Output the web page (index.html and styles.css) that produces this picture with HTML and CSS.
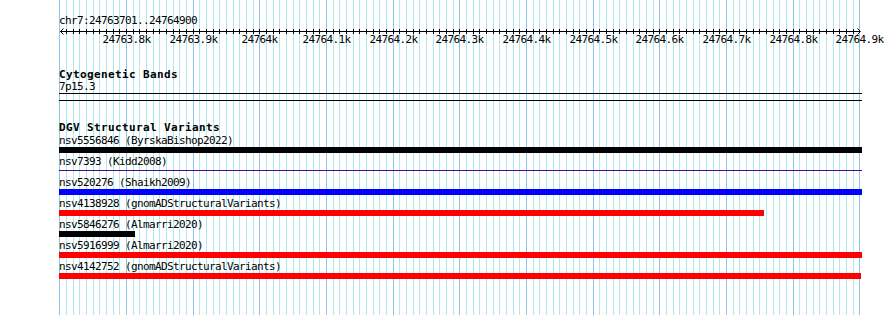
FILE: index.html
```html
<!DOCTYPE html>
<html lang="en">
<head>
    <meta charset="UTF-8">
    <title>chr7:24763701..24764900</title>
    <link rel="stylesheet" href="styles.css">
</head>
<body>
    <div class="track-image">
        <svg id="grid" class="grid" width="890" height="315"></svg>

        <div class="tracks">
            <div class="position-label">chr7:24763701..24764900</div>
            <svg id="ruler" class="ruler" width="831" height="20"></svg>

            <div class="track cytoband-track">
                <div class="track-title">Cytogenetic Bands</div>
                <div class="feature-label">7p15.3</div>
                <div class="band"></div>
            </div>

            <div class="track dgv-track">
                <div class="track-title">DGV Structural Variants</div>

                <div class="feature">
                    <div class="feature-label">nsv5556846 (ByrskaBishop2022)</div>
                    <div class="bar bar-black" style="width: 803px"></div>
                </div>
                <div class="feature">
                    <div class="feature-label">nsv7393 (Kidd2008)</div>
                    <div class="bar bar-thin" style="width: 803px"></div>
                </div>
                <div class="feature">
                    <div class="feature-label">nsv520276 (Shaikh2009)</div>
                    <div class="bar bar-blue" style="width: 803px"></div>
                </div>
                <div class="feature">
                    <div class="feature-label">nsv4138928 (gnomADStructuralVariants)</div>
                    <div class="bar bar-red" style="width: 705px"></div>
                </div>
                <div class="feature">
                    <div class="feature-label">nsv5846276 (Almarri2020)</div>
                    <div class="bar bar-black" style="width: 76px"></div>
                </div>
                <div class="feature">
                    <div class="feature-label">nsv5916999 (Almarri2020)</div>
                    <div class="bar bar-red" style="width: 803px"></div>
                </div>
                <div class="feature">
                    <div class="feature-label">nsv4142752 (gnomADStructuralVariants)</div>
                    <div class="bar bar-red" style="width: 802px"></div>
                </div>
            </div>
        </div>
    </div>
    <script src="ruler.js"></script>
</body>
</html>
```

FILE: styles.css
```css
body {
    margin: 0;
    background: #fff;
    color: #000;
    font-family: 'DejaVu Sans Mono', 'Liberation Mono', monospace;
    font-size: 11px;
}

.track-image {
    position: relative;
    width: 890px;
    height: 315px;
    overflow: hidden;
}

/* guide lines sit behind everything */
.grid {
    position: absolute;
    top: 0;
    left: 0;
}

.grid .minor {
    stroke: #aee8ee;
}

.grid .major {
    stroke: #8ec6ea;
}

.tracks {
    position: relative;
    padding: 15px 0 0 59px;
}

.position-label,
.feature-label {
    height: 11px;
    line-height: 11px;
    letter-spacing: -0.62px;
    white-space: nowrap;
}

.ruler {
    display: block;
}

.ruler line,
.ruler polyline {
    stroke: #000;
    fill: none;
}

.tick-label {
    font-family: 'DejaVu Sans Mono', 'Liberation Mono', monospace;
    font-size: 11px;
    letter-spacing: -0.62px;
    fill: #000;
}

.track-title {
    height: 11px;
    line-height: 11px;
    font-weight: bold;
    letter-spacing: 0.38px;
    white-space: nowrap;
}

.cytoband-track {
    margin-top: 23px;
}

.cytoband-track .feature-label {
    margin-top: 1px;
}

.band {
    box-sizing: border-box;
    width: 803px;
    height: 8px;
    margin-top: 1px;
    border-top: 1px solid #000;
    border-bottom: 1px solid #000;
}

.dgv-track {
    margin-top: 21px;
}

.dgv-track .track-title {
    margin-bottom: 2px;
}

/* Feature rows */
.feature {
    height: 21px;
}

.bar {
    height: 6px;
    margin-top: 1px;
}

.bar-black {
    background: #000;
}

.bar-blue {
    background: #0000ff;
}

.bar-red {
    background: #ff0000;
}

.bar-thin {
    height: 1px;
    margin-top: 3px;
    background: #4b0a8c;
}
```

FILE: ruler.js
```js
// chr7:24763701..24764900 drawn across 800px starting at x=60
var START = 24763700;
var END = 24764900;
var LEFT = 59.7;
var SCALE = 800 / (END - START);
var SVG_NS = 'http://www.w3.org/2000/svg';

function xOf(pos) {
    return Math.floor(LEFT + (pos - START) * SCALE) + 0.5;
}

function el(name, attrs) {
    var node = document.createElementNS(SVG_NS, name);
    for (var key in attrs) {
        node.setAttribute(key, attrs[key]);
    }
    return node;
}

function tickText(pos) {
    var k = pos / 1000;
    return (Math.round(k * 10) / 10) + 'k';
}

var grid = document.getElementById('grid');
var ruler = document.getElementById('ruler');
var offset = 59;

for (var pos = START; pos <= END; pos += 10) {
    var x = xOf(pos);
    var major = pos % 100 === 0;

    grid.appendChild(el('line', {
        x1: x, y1: 0, x2: x, y2: 315,
        'class': major ? 'major' : 'minor'
    }));

    if (pos > START && pos < END) {
        ruler.appendChild(el('line', {
            x1: x - offset, y1: 3, x2: x - offset, y2: 8
        }));
    }

    if (major && pos > START) {
        var label = el('text', {
            x: x - offset,
            y: 17,
            'text-anchor': 'middle',
            'class': 'tick-label'
        });
        label.textContent = tickText(pos);
        ruler.appendChild(label);
    }
}

// axis line with arrow heads at both ends
ruler.appendChild(el('line', { x1: 1, y1: 5.5, x2: 801, y2: 5.5 }));
ruler.appendChild(el('polyline', { points: '4.5,2.5 1.5,5.5 4.5,8.5' }));
ruler.appendChild(el('polyline', { points: '798.5,2.5 801.5,5.5 798.5,8.5' }));
```
